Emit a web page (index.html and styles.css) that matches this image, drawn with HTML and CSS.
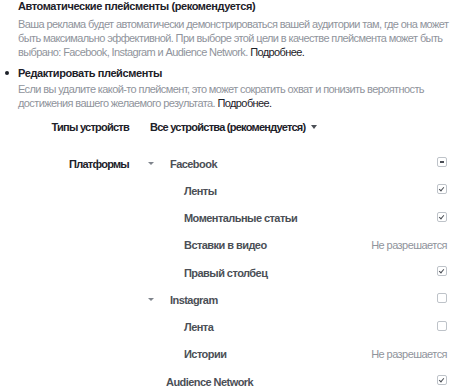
FILE: index.html
```html
<!DOCTYPE html>
<html lang="ru">
<head>
    <meta charset="UTF-8">
    <title>Плейсменты</title>
    <link rel="stylesheet" href="styles.css">
</head>
<body>
    <div class="placements">
        <div class="option">
            <div class="option-title">Автоматические плейсменты (рекомендуется)</div>
            <p class="option-desc">Ваша реклама будет автоматически демонстрироваться вашей аудитории там, где она может быть максимально эффективной. При выборе этой цели в качестве плейсмента может быть выбрано: Facebook, Instagram и Audience Network. <a href="#" class="more">Подробнее.</a></p>
        </div>
        <div class="option option-edit">
            <span class="bullet"></span>
            <div class="option-title">Редактировать плейсменты</div>
            <p class="option-desc">Если вы удалите какой-то плейсмент, это может сократить охват и понизить вероятность достижения вашего желаемого результата. <a href="#" class="more">Подробнее.</a></p>
        </div>

        <div class="device-row">
            <div class="label">Типы устройств</div>
            <div class="select">Все устройства (рекомендуется) <span class="caret"></span></div>
        </div>

        <div class="platforms">
            <div class="row">
                <div class="label">Платформы</div>
                <div class="toggle"><span class="caret light"></span></div>
                <div class="name">Facebook</div>
                <div class="ctrl"><span class="check partial"></span></div>
            </div>
            <div class="row">
                <div class="label"></div>
                <div class="toggle"></div>
                <div class="name sub">Ленты</div>
                <div class="ctrl"><span class="check on"></span></div>
            </div>
            <div class="row">
                <div class="label"></div>
                <div class="toggle"></div>
                <div class="name sub">Моментальные статьи</div>
                <div class="ctrl"><span class="check on"></span></div>
            </div>
            <div class="row">
                <div class="label"></div>
                <div class="toggle"></div>
                <div class="name sub">Вставки в видео</div>
                <div class="ctrl"><span class="not-allowed">Не разрешается</span></div>
            </div>
            <div class="row">
                <div class="label"></div>
                <div class="toggle"></div>
                <div class="name sub">Правый столбец</div>
                <div class="ctrl"><span class="check on"></span></div>
            </div>
            <div class="row">
                <div class="label"></div>
                <div class="toggle"><span class="caret light"></span></div>
                <div class="name">Instagram</div>
                <div class="ctrl"><span class="check"></span></div>
            </div>
            <div class="row">
                <div class="label"></div>
                <div class="toggle"></div>
                <div class="name sub">Лента</div>
                <div class="ctrl"><span class="check"></span></div>
            </div>
            <div class="row">
                <div class="label"></div>
                <div class="toggle"></div>
                <div class="name sub">Истории</div>
                <div class="ctrl"><span class="not-allowed">Не разрешается</span></div>
            </div>
            <div class="row">
                <div class="label"></div>
                <div class="toggle"></div>
                <div class="name network">Audience Network</div>
                <div class="ctrl"><span class="check on"></span></div>
            </div>
        </div>
    </div>
</body>
</html>
```

FILE: styles.css
```css
body {
    margin: 0;
    font-family: "Liberation Sans", Arial, sans-serif;
    font-size: 11px;
    letter-spacing: -0.55px;
    color: #1d2129;
    background-color: white;
}
.option {
    position: relative;
    padding-left: 18px;
}
.option-title {
    font-weight: bold;
    line-height: 13px;
    letter-spacing: -0.4px;
    color: #1d2129;
}
.option-desc {
    margin: 4px 0 0 0;
    line-height: 14px;
    letter-spacing: -0.6px;
    color: #90949c;
}
.option-edit {
    margin-top: 7px;
}
.option-edit .option-title {
    line-height: 14px;
}
.option-edit .option-desc {
    margin-top: 2px;
}
.bullet {
    position: absolute;
    left: 5px;
    top: 5px;
    width: 4px;
    height: 4px;
    border-radius: 50%;
    background-color: #1d2129;
}
.more {
    color: #1d2129;
    text-decoration: none;
}
.device-row {
    display: flex;
    align-items: center;
    height: 14px;
    margin-top: 10px;
    font-weight: bold;
    color: #1d2129;
}
.label {
    width: 129px;
    flex: none;
    text-align: right;
    font-weight: bold;
    letter-spacing: -0.75px;
    color: #1d2129;
}
.select {
    margin-left: 21px;
    display: flex;
    align-items: center;
    letter-spacing: -0.75px;
}
.caret {
    display: inline-block;
    width: 0;
    height: 0;
    margin-left: 6px;
    border-left: 3.5px solid transparent;
    border-right: 3.5px solid transparent;
    border-top: 4px solid #4b4f56;
}
.caret.light {
    margin-left: 0;
    border-left-width: 3px;
    border-right-width: 3px;
    border-top: 3px solid #7f848c;
}
.platforms {
    margin-top: 16px;
    padding-right: 3px;
}
.row {
    display: flex;
    align-items: center;
    height: 27.25px;
}
.toggle {
    width: 41px;
    flex: none;
    display: flex;
    justify-content: flex-start;
    padding-left: 19px;
    box-sizing: border-box;
}
.name {
    flex: 1;
    font-weight: bold;
    color: #4b4f56;
}
.name.sub {
    padding-left: 14px;
}
.name.network {
    margin-left: -4px;
}
.ctrl {
    display: flex;
    align-items: center;
}
.not-allowed {
    color: #90949c;
}
.check {
    position: relative;
    display: block;
    width: 8px;
    height: 8px;
    border: 1px solid #bec3c9;
    border-radius: 2px;
    background-color: white;
    margin-top: -3px;
}
.check.on::after {
    content: "";
    position: absolute;
    left: 2px;
    top: 1px;
    width: 2px;
    height: 4px;
    border-right: 1.5px solid #4b4f56;
    border-bottom: 1.5px solid #4b4f56;
    transform: rotate(40deg);
}
.check.partial::after {
    content: "";
    position: absolute;
    left: 2px;
    top: 3px;
    width: 4px;
    height: 2px;
    background-color: #4b4f56;
}
```
